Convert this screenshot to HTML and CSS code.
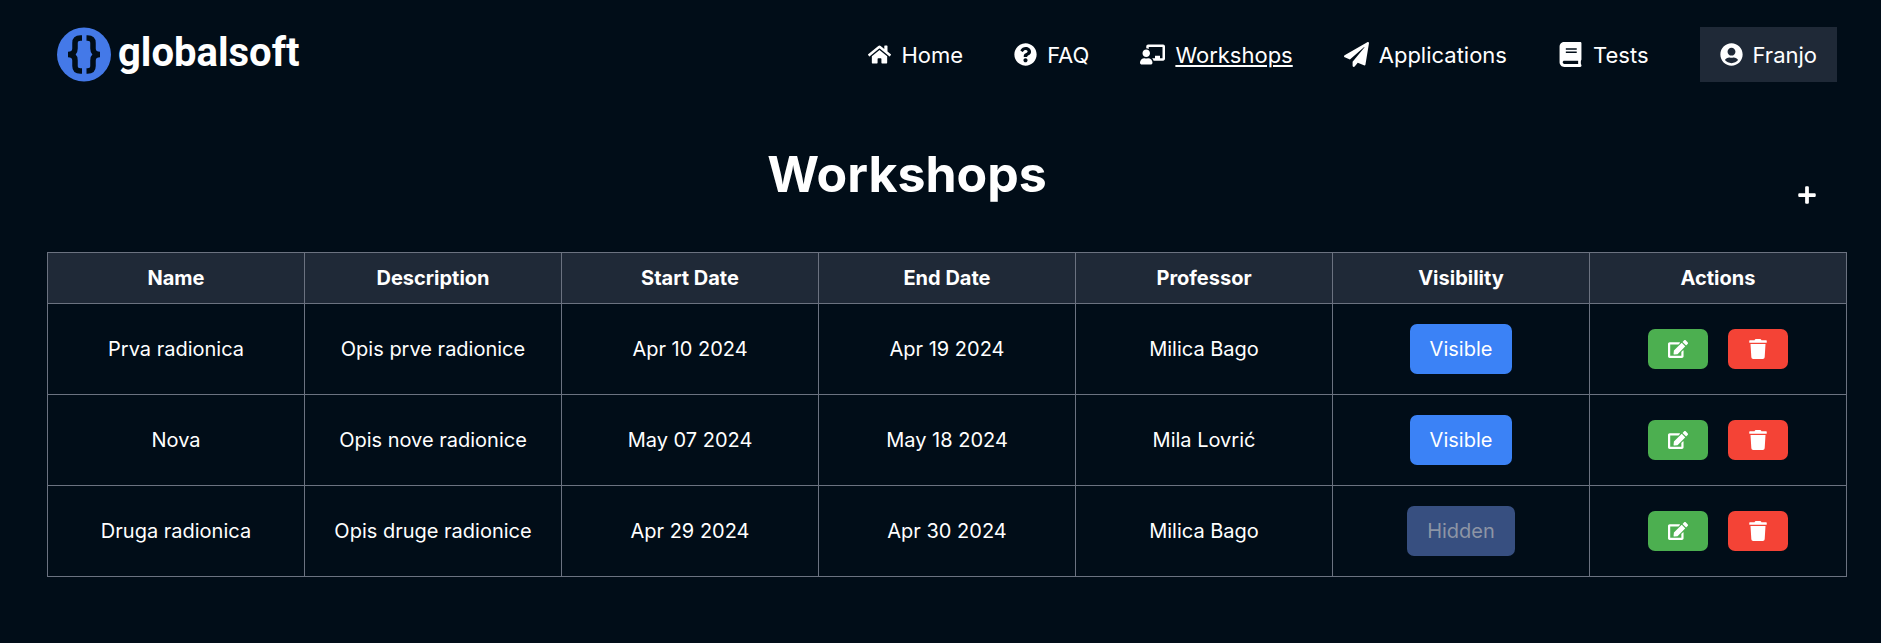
FILE: index.html
```html
<!DOCTYPE html>
<html lang="en">
<head>
<meta charset="utf-8">
<title>Workshops - globalsoft</title>
<link rel="stylesheet" href="styles.css">
</head>
<body>
<svg class="sprite" aria-hidden="true">
  <symbol id="edit" viewBox="0 0 576 512"><path d="M402.6 83.2l90.2 90.2c3.8 3.8 3.8 10 0 13.8L274.4 405.6l-92.8 10.3c-12.4 1.4-22.9-9.1-21.5-21.5l10.3-92.8L388.8 83.2c3.8-3.8 10-3.8 13.8 0zm162-22.9l-48.8-48.8c-15.2-15.2-39.9-15.2-55.2 0l-35.4 35.4c-3.8 3.8-3.8 10 0 13.8l90.2 90.2c3.8 3.8 10 3.8 13.8 0l35.4-35.4c15.2-15.3 15.2-40 0-55.2zM384 346.2V448H64V128h229.8c3.2 0 6.2-1.3 8.5-3.5l40-40c7.6-7.6 2.2-20.5-8.5-20.5H48C21.5 64 0 85.5 0 112v352c0 26.5 21.5 48 48 48h352c26.5 0 48-21.5 48-48V306.2c0-10.7-12.9-16-20.5-8.5l-40 40c-2.2 2.3-3.5 5.3-3.5 8.5z"/></symbol>
  <symbol id="trash" viewBox="0 0 448 512"><path d="M432 32H312l-9.4-18.7A24 24 0 0 0 281.1 0H166.8a23.72 23.72 0 0 0-21.4 13.3L136 32H16A16 16 0 0 0 0 48v32a16 16 0 0 0 16 16h416a16 16 0 0 0 16-16V48a16 16 0 0 0-16-16zM53.2 467a48 48 0 0 0 47.9 45h245.8a48 48 0 0 0 47.9-45L416 128H32z"/></symbol>
</svg>
<header class="topbar">
  <a class="brand" href="#">
    <svg class="brand-mark" viewBox="0 0 54 54" aria-hidden="true">
      <circle cx="27" cy="27" r="27" fill="#4479e8"/>
      <g fill="none" stroke="#010d18" stroke-width="5.500">
        <path d="M25 10.500h-1.500q-5.500 0-5.500 5v5.500q0 6-7 6q7 0 7 6v5.500q0 5 5.500 5h1.500"/>
        <path d="M29.500 10.500h1q5.500 0 5.500 5v5.500q0 6 7 6q-7 0-7 6v5.500q0 5-5.500 5h-1"/>
      </g>
    </svg>
    <span class="brand-name">globalsoft</span>
  </a>
  <nav class="nav">
    <a class="nav-link" href="#"><svg class="icon" viewBox="0 0 576 512" aria-hidden="true"><path d="M280.37 148.26L96 300.11V464a16 16 0 0 0 16 16l112.06-.29a16 16 0 0 0 15.92-16V368a16 16 0 0 1 16-16h64a16 16 0 0 1 16 16v95.64a16 16 0 0 0 16 16.05L464 480a16 16 0 0 0 16-16V300L295.67 148.26a12.19 12.19 0 0 0-15.3 0zM571.6 251.47L488 182.56V44.05a12 12 0 0 0-12-12h-56a12 12 0 0 0-12 12v72.61L318.47 43a48 48 0 0 0-61 0L4.34 251.47a12 12 0 0 0-1.6 16.9l25.5 31A12 12 0 0 0 45.15 301l235.22-193.74a12.19 12.19 0 0 1 15.3 0L530.9 301a12 12 0 0 0 16.9-1.6l25.5-31a12 12 0 0 0-1.7-16.93z"/></svg><span>Home</span></a>
    <a class="nav-link" href="#"><svg class="icon" viewBox="0 0 512 512" aria-hidden="true"><path d="M504 256c0 136.997-111.043 248-248 248S8 392.997 8 256C8 119.083 119.043 8 256 8s248 111.083 248 248zM262.655 90c-54.497 0-89.255 22.957-116.549 63.758-3.536 5.286-2.353 12.415 2.715 16.258l34.699 26.310c5.205 3.947 12.621 3.008 16.665-2.122 17.864-22.658 30.113-35.797 57.303-35.797 20.429 0 45.698 13.148 45.698 32.958 0 14.976-12.363 22.667-32.534 33.976C247.128 238.528 216 254.941 216 296v4c0 6.627 5.373 12 12 12h56c6.627 0 12-5.373 12-12v-1.333c0-28.462 83.186-29.647 83.186-106.667 0-58.002-60.165-102-116.531-102zM256 338c-25.365 0-46 20.635-46 46 0 25.364 20.635 46 46 46s46-20.636 46-46c0-25.365-20.635-46-46-46z"/></svg><span>FAQ</span></a>
    <a class="nav-link current" href="#" aria-current="page"><svg class="icon icon-large" viewBox="0 0 640 512" aria-hidden="true"><path d="M208 352c-2.390 0-4.780.350-7.060 1.090C187.980 357.300 174.350 360 160 360c-14.350 0-27.980-2.700-40.950-6.910-2.280-.740-4.660-1.090-7.050-1.090C49.940 352-.330 402.480 0 464.620.140 490.880 21.730 512 48 512h224c26.270 0 47.860-21.120 48-47.380.330-62.140-49.940-112.620-112-112.620zm-48-32c53.020 0 96-42.980 96-96s-42.980-96-96-96-96 42.980-96 96 42.980 96 96 96zM592 0H208c-26.470 0-48 22.250-48 49.590V96c23.420 0 45.100 6.780 64 17.800V64h352v288h-64v-64H384v64h-76.240c19.100 16.690 33.120 38.730 39.690 64H592c26.470 0 48-22.250 48-49.590V49.590C640 22.250 618.470 0 592 0z"/></svg><span>Workshops</span></a>
    <a class="nav-link" href="#"><svg class="icon icon-large" viewBox="0 0 512 512" aria-hidden="true"><path d="M476 3.200L12.500 270.600c-18.100 10.400-15.800 35.600 2.200 43.200L121 358.400l287.300-253.200c5.500-4.900 13.300 2.600 8.600 8.300L176 407v80.500c0 23.600 28.500 32.900 42.500 15.800L282 426l124.600 52.200c14.200 6 30.400-2.900 33-18.200l72-432C515 7.800 493.300-6.800 476 3.200z"/></svg><span>Applications</span></a>
    <a class="nav-link" href="#"><svg class="icon icon-large" viewBox="0 0 448 512" aria-hidden="true"><path d="M448 360V24c0-13.300-10.700-24-24-24H96C43 0 0 43 0 96v320c0 53 43 96 96 96h328c13.300 0 24-10.700 24-24v-16c0-7.500-3.500-14.300-8.900-18.700-4.200-15.400-4.200-59.300 0-74.700 5.400-4.300 8.900-11.100 8.900-18.600zM128 134c0-3.300 2.700-6 6-6h212c3.300 0 6 2.700 6 6v20c0 3.300-2.700 6-6 6H134c-3.300 0-6-2.700-6-6v-20zm0 64c0-3.300 2.700-6 6-6h212c3.300 0 6 2.700 6 6v20c0 3.300-2.700 6-6 6H134c-3.300 0-6-2.700-6-6v-20zm253.400 250H96c-17.700 0-32-14.300-32-32 0-17.600 14.400-32 32-32h285.400c-1.900 17.100-1.900 46.900 0 64z"/></svg><span>Tests</span></a>
    <button class="nav-link user" type="button"><svg class="icon" viewBox="0 0 496 512" aria-hidden="true"><path d="M248 8C111 8 0 119 0 256s111 248 248 248 248-111 248-248S385 8 248 8zm0 96c48.600 0 88 39.400 88 88s-39.400 88-88 88-88-39.400-88-88 39.400-88 88-88zm0 344c-58.700 0-111.300-26.600-146.500-68.200 18.800-35.400 55.600-59.800 98.500-59.800 2.400 0 4.800.4 7.100 1.100 13 4.200 26.600 6.900 40.900 6.900 14.300 0 28-2.700 40.900-6.900 2.300-.7 4.700-1.100 7.100-1.100 42.900 0 79.700 24.400 98.500 59.800C359.300 421.400 306.700 448 248 448z"/></svg><span>Franjo</span></button>
  </nav>
</header>
<main class="content">
  <div class="heading">
    <h1 class="title">Workshops</h1>
    <button class="add" type="button" aria-label="Add workshop"><svg class="add-icon" viewBox="0 0 448 512" aria-hidden="true"><path d="M416 208H272V64c0-17.670-14.330-32-32-32h-32c-17.670 0-32 14.330-32 32v144H32c-17.670 0-32 14.330-32 32v32c0 17.670 14.330 32 32 32h144v144c0 17.670 14.330 32 32 32h32c17.670 0 32-14.330 32-32V304h144c17.670 0 32-14.330 32-32v-32c0-17.670-14.330-32-32-32z"/></svg></button>
  </div>
  <table class="workshops">
    <thead>
      <tr><th scope="col">Name</th><th scope="col">Description</th><th scope="col">Start Date</th><th scope="col">End Date</th><th scope="col">Professor</th><th scope="col">Visibility</th><th scope="col">Actions</th></tr>
    </thead>
    <tbody>
      <tr>
        <td>Prva radionica</td><td>Opis prve radionice</td><td>Apr 10 2024</td><td>Apr 19 2024</td><td>Milica Bago</td>
        <td><button class="visibility" type="button">Visible</button></td>
        <td><div class="actions"><button class="action edit" type="button" aria-label="Edit"><svg class="action-icon"><use href="#edit"/></svg></button><button class="action delete" type="button" aria-label="Delete"><svg class="action-icon"><use href="#trash"/></svg></button></div></td>
      </tr>
      <tr>
        <td>Nova</td><td>Opis nove radionice</td><td>May 07 2024</td><td>May 18 2024</td><td>Mila Lovrić</td>
        <td><button class="visibility" type="button">Visible</button></td>
        <td><div class="actions"><button class="action edit" type="button" aria-label="Edit"><svg class="action-icon"><use href="#edit"/></svg></button><button class="action delete" type="button" aria-label="Delete"><svg class="action-icon"><use href="#trash"/></svg></button></div></td>
      </tr>
      <tr>
        <td>Druga radionica</td><td>Opis druge radionice</td><td>Apr 29 2024</td><td>Apr 30 2024</td><td>Milica Bago</td>
        <td><button class="visibility off" type="button">Hidden</button></td>
        <td><div class="actions"><button class="action edit" type="button" aria-label="Edit"><svg class="action-icon"><use href="#edit"/></svg></button><button class="action delete" type="button" aria-label="Delete"><svg class="action-icon"><use href="#trash"/></svg></button></div></td>
      </tr>
    </tbody>
  </table>
</main>
</body>
</html>
```
FILE: styles.css
```css
* { box-sizing: border-box; }
body {
  margin: 0;
  background: #010d18;
  color: #fff;
  font: 20px/30px Inter, "Liberation Sans", sans-serif;
}
button { border: 0; color: inherit; font: inherit; cursor: pointer; }
svg { fill: currentColor; flex: none; }
.sprite { display: none; }

.topbar {
  display: flex;
  align-items: center;
  justify-content: space-between;
  padding: 27px 44px 27px 57px;
}
.brand {
  display: flex;
  align-items: center;
  gap: 7px;
  color: #fff;
  text-decoration: none;
}
.brand-mark { width: 54px; height: 55px; }
.brand-name {
  font: 700 40px/50px Roboto, Inter, sans-serif;
  padding-bottom: 4px;
}
.nav { display: flex; align-items: center; gap: 51px; }
.nav-link {
  display: flex;
  align-items: center;
  gap: 10px;
  color: #fff;
  font-size: 22px;
  line-height: 33px;
  text-decoration: none;
}
.nav-link span { padding-top: 2px; }
.current span { text-decoration: underline; }
.icon { width: 23px; height: 23px; }
.icon-large { width: 25px; height: 25px; }
.user { padding: 10px 20px; background: #1f2937; }

.content { padding: 30px 34px 0 47px; }
.heading { display: flex; align-items: center; margin-bottom: 42px; }
.title {
  flex: 1;
  margin: 0;
  padding-bottom: 1px;
  font-size: 50px;
  line-height: 70px;
  font-weight: 700;
  text-align: center;
}
.add {
  display: flex;
  justify-content: center;
  width: 80px;
  padding: 40px 0 0;
  background: none;
}
.add-icon { width: 20px; height: 20px; }

.workshops {
  width: 100%;
  table-layout: fixed;
  border-collapse: collapse;
  text-align: center;
}
.workshops th, .workshops td { border: 1px solid #6b7280; }
.workshops th { padding: 10px; background: #1f2937; font-weight: 700; }
.workshops td { padding: 20px 10px; }
.visibility {
  display: inline-block;
  vertical-align: middle;
  padding: 10px 20px;
  border-radius: 7px;
  background: #3b82f6;
}
.off { background: #374f80; color: #8d95a5; }
.actions { display: flex; justify-content: center; gap: 20px; }
.action { display: flex; padding: 10px 20px; border-radius: 7px; }
.edit { background: #4caf50; }
.delete { background: #f44336; }
.action-icon { width: 20px; height: 20px; }
```
